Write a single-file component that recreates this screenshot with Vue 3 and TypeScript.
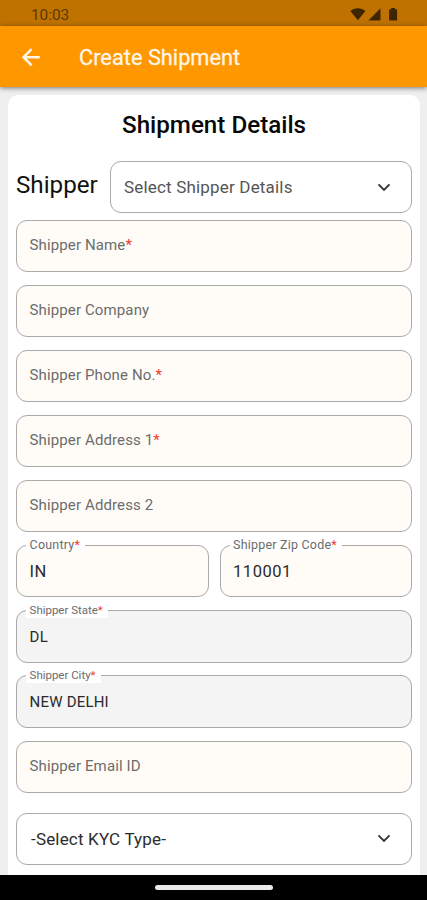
<script setup lang="ts">
interface Field {
  label: string
  required?: boolean
  value?: string
  locked?: boolean
  small?: boolean
}

const rows: Field[][] = [
  [{ label: 'Shipper Name', required: true }],
  [{ label: 'Shipper Company' }],
  [{ label: 'Shipper Phone No.', required: true }],
  [{ label: 'Shipper Address 1', required: true }],
  [{ label: 'Shipper Address 2' }],
  [
    { label: 'Country', required: true, value: 'IN' },
    { label: 'Shipper Zip Code', required: true, value: '110001' },
  ],
  [{ label: 'Shipper State', required: true, value: 'DL', locked: true, small: true }],
  [{ label: 'Shipper City', required: true, value: 'NEW DELHI', locked: true, small: true }],
  [{ label: 'Shipper Email ID' }],
]
</script>

<template>
  <div class="screen">
    <div class="status">
      <span class="clock">10:03</span>
      <svg class="signals" width="50" height="16" viewBox="0 0 50 16">
        <path d="M0.4 4.1 C4.5 0.4 11.3 0.4 15.4 4.1 L7.9 13.3 Z" />
        <path d="M18.4 13.6 L30.5 1.3 V13.6 Z" />
        <path d="M39.1 2.3 H41.2 V0.9 H45 V2.3 H47.1 V13.6 H39.1 Z" />
      </svg>
    </div>
    <header class="appbar">
      <svg class="back" width="20" height="20" viewBox="0 0 20 20">
        <path d="M18.8 10.2 H3 M10.6 2.1 L2.5 10.2 L10.6 18.3" />
      </svg>
      <h1>Create Shipment</h1>
    </header>
    <main class="body">
      <section class="card">
        <h2>Shipment Details</h2>
        <div class="pick">
          <span class="who">Shipper</span>
          <div class="select muted">
            <span>Select Shipper Details</span>
            <svg class="chevron" width="14" height="9" viewBox="0 0 14 9"><path d="M1.5 1.3 L7 6.9 L12.5 1.3" /></svg>
          </div>
        </div>
        <div v-for="(row, i) in rows" :key="i" class="row">
          <template v-for="f in row" :key="f.label">
            <fieldset v-if="f.value" class="field filled" :class="{ locked: f.locked, small: f.small }">
              <legend>{{ f.label }}<b v-if="f.required">*</b></legend>
              <span class="value">{{ f.value }}</span>
            </fieldset>
            <div v-else class="field">
              <span class="hint">{{ f.label }}<b v-if="f.required">*</b></span>
            </div>
          </template>
        </div>
        <div class="select kyc">
          <span>-Select KYC Type-</span>
          <svg class="chevron" width="14" height="9" viewBox="0 0 14 9"><path d="M1.5 1.3 L7 6.9 L12.5 1.3" /></svg>
        </div>
      </section>
    </main>
    <footer class="nav"><i></i></footer>
  </div>
</template>

<style>
body {
  margin: 0;
  overflow: hidden;
}
</style>

<style scoped>
.screen {
  width: 427px;
  height: 900px;
  display: flex;
  flex-direction: column;
  overflow: hidden;
  background: #efefef;
  font-family: Roboto, "Liberation Sans", sans-serif;
}
.screen * {
  box-sizing: border-box;
}
.status {
  flex: none;
  height: 26px;
  padding: 1px 27px 0 31px;
  display: flex;
  align-items: center;
  justify-content: space-between;
  background: #bf7200;
  color: #5c3700;
}
.clock {
  font-size: 15.3px;
  line-height: 28px;
  padding-top: 3px;
}
.signals {
  fill: #402600;
  margin-top: 3px;
}
.appbar {
  flex: none;
  position: relative;
  height: 61px;
  padding-left: 21px;
  display: flex;
  align-items: center;
  background: #ff9800;
  box-shadow: 0 1px 5px rgba(0, 0, 0, 0.5);
}
.back {
  fill: none;
  stroke: #fff5e8;
  stroke-width: 2.5;
}
h1 {
  margin: 2px 0 0 38px;
  color: #fff5e8;
  font-size: 21.8px;
  font-weight: 400;
  -webkit-text-stroke: 0.3px #fff5e8;
}
.body {
  flex: 1;
  min-height: 0;
  overflow: hidden;
  padding: 8px 7px 0 8px;
}
.card {
  height: 800px;
  padding: 0 8px;
  background: #fff;
  border-radius: 10px;
}
h2 {
  margin: 0;
  height: 66px;
  line-height: 60px;
  text-align: center;
  font-size: 24.2px;
  font-weight: 500;
  color: #080808;
}
.pick {
  height: 52px;
  margin-bottom: 7px;
  display: flex;
  align-items: center;
  justify-content: space-between;
}
.who {
  font-size: 24.2px;
  margin-top: -5px;
  color: #111;
}
.select {
  height: 52px;
  padding: 0 20px 0 13px;
  display: flex;
  align-items: center;
  justify-content: space-between;
  border: 1px solid #aaa;
  border-radius: 11px;
  font-size: 17px;
  letter-spacing: 0.18px;
  color: #2b2b2b;
}
.muted {
  width: 302px;
  color: #555;
}
.kyc {
  margin-top: 20px;
  padding-left: 14px;
}
.chevron {
  fill: none;
  stroke: #333;
  stroke-width: 1.8;
}
.row {
  display: flex;
  align-items: flex-end;
  gap: 11px;
  height: 52px;
  margin-bottom: 13.1px;
}
.row:last-of-type {
  margin-bottom: 0;
}
.field {
  flex: 1;
  min-width: 0;
  height: 52px;
  margin: 0;
  padding: 0 12.6px 2px;
  display: flex;
  align-items: center;
  border: 1px solid #aaa;
  border-radius: 11px;
  background: #fffcf8;
  color: #6c6c6c;
  font-size: 15px;
}
.filled {
  display: block;
  height: 59px;
  padding: 0 9px;
}
.locked {
  background: #f4f4f4;
}
.hint {
  letter-spacing: 0.12px;
}
b {
  font-weight: 400;
  color: #f0382f;
}
legend {
  height: 14px;
  padding: 0 5px 0 3.6px;
  font-size: 12.5px;
  line-height: 14px;
  letter-spacing: 0.2px;
  background: #fff;
}
.value {
  display: block;
  padding-left: 3.6px;
  line-height: 39px;
  font-size: 16.5px;
  letter-spacing: 0.5px;
  color: #2b2b2b;
}
.small legend {
  font-size: 11.5px;
  line-height: 13px;
  letter-spacing: -0.02px;
}
.small .value {
  font-size: 15px;
  line-height: 38px;
  letter-spacing: 0.2px;
}
.nav {
  flex: none;
  height: 25px;
  display: flex;
  justify-content: center;
  padding-top: 10px;
  background: #000;
}
.nav i {
  width: 118px;
  height: 5px;
  border-radius: 3px;
  background: #e9e9e9;
}
</style>
